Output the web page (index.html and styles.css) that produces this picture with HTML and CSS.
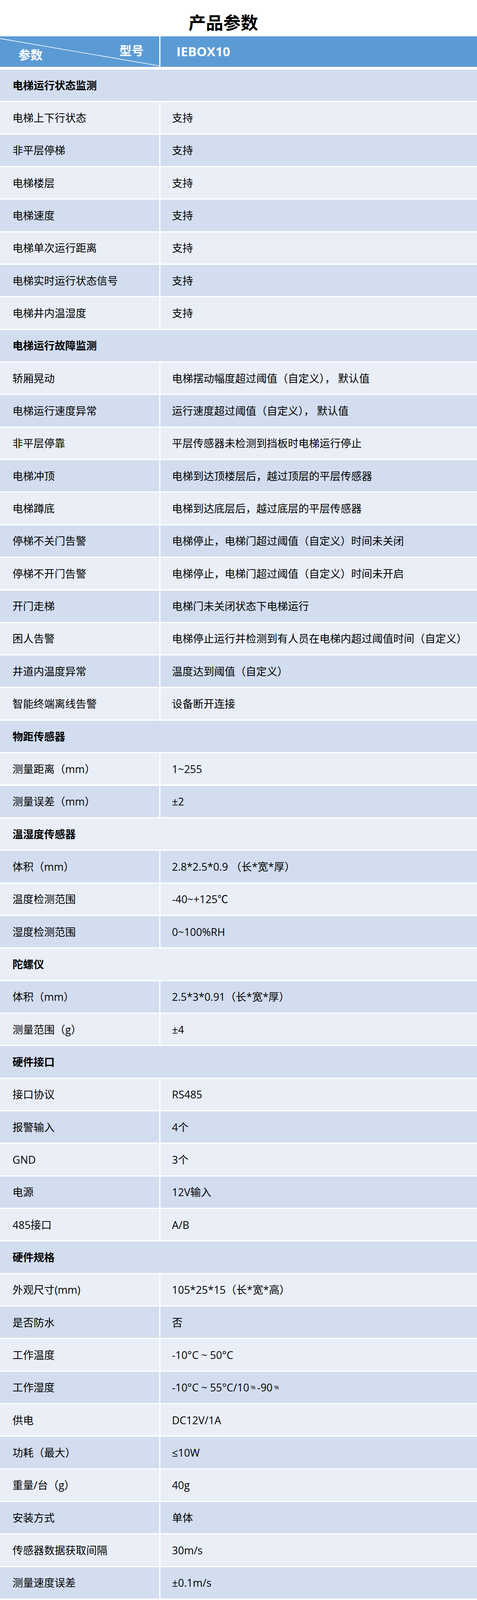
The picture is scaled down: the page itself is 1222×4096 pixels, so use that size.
FILE: index.html
```html
<!DOCTYPE html>
<html lang="zh-CN">
<head>
<meta charset="utf-8">
<title>产品参数</title>
<link rel="stylesheet" href="styles.css">
</head>
<body>
<div class="page">
  <div class="title">产品参数</div>
  <div class="head">
    <div class="head-left">
      <svg class="diag" viewBox="0 0 408 78" preserveAspectRatio="none"><line x1="0" y1="5.7" x2="408" y2="76.5" stroke="#ffffff" stroke-width="1.6"/></svg>
      <span class="h-param">参数</span>
      <span class="h-model">型号</span>
    </div>
    <div class="head-right"><span class="h-name">IEBOX10</span></div>
  </div>
  <div class="rows">
    <div class="row sec"><div class="cell">电梯运行状态监测</div></div>
    <div class="row"><div class="cell">电梯上下行状态</div><div class="cell val">支持</div></div>
    <div class="row"><div class="cell">非平层停梯</div><div class="cell val">支持</div></div>
    <div class="row"><div class="cell">电梯楼层</div><div class="cell val">支持</div></div>
    <div class="row"><div class="cell">电梯速度</div><div class="cell val">支持</div></div>
    <div class="row"><div class="cell">电梯单次运行距离</div><div class="cell val">支持</div></div>
    <div class="row"><div class="cell">电梯实时运行状态信号</div><div class="cell val">支持</div></div>
    <div class="row"><div class="cell">电梯井内温湿度</div><div class="cell val">支持</div></div>
    <div class="row sec"><div class="cell">电梯运行故障监测</div></div>
    <div class="row"><div class="cell">轿厢晃动</div><div class="cell val">电梯摆动幅度超过阈值（自定义），<span class="sp"></span>默认值</div></div>
    <div class="row"><div class="cell">电梯运行速度异常</div><div class="cell val">运行速度超过阈值（自定义），<span class="sp"></span>默认值</div></div>
    <div class="row"><div class="cell">非平层停靠</div><div class="cell val">平层传感器未检测到挡板时电梯运行停止</div></div>
    <div class="row"><div class="cell">电梯冲顶</div><div class="cell val">电梯到达顶楼层后，越过顶层的平层传感器</div></div>
    <div class="row"><div class="cell">电梯蹲底</div><div class="cell val">电梯到达底层后，越过底层的平层传感器</div></div>
    <div class="row"><div class="cell">停梯不关门告警</div><div class="cell val">电梯停止，电梯门超过阈值（自定义）时间未关闭</div></div>
    <div class="row"><div class="cell">停梯不开门告警</div><div class="cell val">电梯停止，电梯门超过阈值（自定义）时间未开启</div></div>
    <div class="row"><div class="cell">开门走梯</div><div class="cell val">电梯门未关闭状态下电梯运行</div></div>
    <div class="row"><div class="cell">困人告警</div><div class="cell val">电梯停止运行并检测到有人员在电梯内超过阈值时间（自定义）</div></div>
    <div class="row"><div class="cell">井道内温度异常</div><div class="cell val">温度达到阈值（自定义）</div></div>
    <div class="row"><div class="cell">智能终端离线告警</div><div class="cell val">设备断开连接</div></div>
    <div class="row sec"><div class="cell">物距传感器</div></div>
    <div class="row"><div class="cell">测量距离（mm）</div><div class="cell val">1~255</div></div>
    <div class="row"><div class="cell">测量误差（mm）</div><div class="cell val">±2</div></div>
    <div class="row sec"><div class="cell">温湿度传感器</div></div>
    <div class="row"><div class="cell">体积（mm）</div><div class="cell val">2.8*2.5*0.9 （长*宽*厚）</div></div>
    <div class="row"><div class="cell">温度检测范围</div><div class="cell val">-40~+125℃</div></div>
    <div class="row"><div class="cell">湿度检测范围</div><div class="cell val">0~100%RH</div></div>
    <div class="row sec"><div class="cell">陀螺仪</div></div>
    <div class="row"><div class="cell">体积（mm）</div><div class="cell val">2.5*3*0.91（长*宽*厚）</div></div>
    <div class="row"><div class="cell">测量范围（g）</div><div class="cell val">±4</div></div>
    <div class="row sec"><div class="cell">硬件接口</div></div>
    <div class="row"><div class="cell">接口协议</div><div class="cell val">RS485</div></div>
    <div class="row"><div class="cell">报警输入</div><div class="cell val">4个</div></div>
    <div class="row"><div class="cell">GND</div><div class="cell val">3个</div></div>
    <div class="row"><div class="cell">电源</div><div class="cell val">12V输入</div></div>
    <div class="row"><div class="cell">485接口</div><div class="cell val">A/B</div></div>
    <div class="row sec"><div class="cell">硬件规格</div></div>
    <div class="row"><div class="cell">外观尺寸(mm)</div><div class="cell val">105*25*15（长*宽*高）</div></div>
    <div class="row"><div class="cell">是否防水</div><div class="cell val">否</div></div>
    <div class="row"><div class="cell">工作温度</div><div class="cell val">-10°C ~ 50°C</div></div>
    <div class="row"><div class="cell">工作湿度</div><div class="cell val">-10°C ~ 55°C/10<span class="pct">%</span>-90<span class="pct">%</span></div></div>
    <div class="row"><div class="cell">供电</div><div class="cell val">DC12V/1A</div></div>
    <div class="row"><div class="cell">功耗（最大）</div><div class="cell val">≤10W</div></div>
    <div class="row"><div class="cell">重量/台（g）</div><div class="cell val">40g</div></div>
    <div class="row"><div class="cell">安装方式</div><div class="cell val">单体</div></div>
    <div class="row"><div class="cell">传感器数据获取间隔</div><div class="cell val">30m/s</div></div>
    <div class="row"><div class="cell">测量速度误差</div><div class="cell val">±0.1m/s</div></div>
  </div>
</div>
</body>
</html>
```

FILE: styles.css
```css
html, body {
  margin: 0;
  padding: 0;
  background: #ffffff;
}

body {
  font-family: "Open Sans", "Noto Sans CJK SC", sans-serif;
  color: #000000;
}

.page {
  width: 1222px;
}

.title {
  height: 93px;
  box-sizing: border-box;
  padding: 34px 78px 0 0;
  text-align: center;
  font-size: 44.6px;
  line-height: 1;
  font-weight: 700;
  font-family: "Noto Sans CJK SC", sans-serif;
}

.head {
  height: 78px;
  display: grid;
  grid-template-columns: 408px 1fr;
  column-gap: 3px;
  margin-bottom: 7px;
}

.head-left,
.head-right {
  background: #5b9bd5;
  border-bottom: 1px solid #4f8ccb;
  box-sizing: border-box;
  color: #ffffff;
  font-weight: 700;
  line-height: 1;
}

.head-left {
  position: relative;
  display: flex;
  justify-content: space-between;
  align-items: flex-start;
  padding: 0 40px 0 47px;
  font-size: 31px;
  font-family: "Noto Sans CJK SC", sans-serif;
}

.diag {
  position: absolute;
  left: 0;
  top: 0;
  width: 100%;
  height: 100%;
}

.h-param {
  position: relative;
  margin-top: 30px;
}

.h-model {
  position: relative;
  margin-top: 19px;
}

.head-right {
  padding: 22px 0 0 41px;
  font-size: 33px;
}

.rows {
  display: flex;
  flex-direction: column;
  gap: 3.1px;
}

.row {
  height: 80.26px;
  display: grid;
  grid-template-columns: 408px 1fr;
  column-gap: 3px;
  --bg: #e9eef7;
}

.rows > .row:nth-child(odd) {
  --bg: #d2ddef;
}

.row.sec {
  grid-template-columns: 1fr;
}

.cell {
  background: var(--bg);
  display: flex;
  align-items: center;
  padding-left: 32px;
  font-size: 27px;
  line-height: 1;
  white-space: nowrap;
}

.cell.val {
  padding-left: 29.5px;
}

.sec .cell {
  font-weight: 700;
}

.sp {
  display: inline-block;
  width: 7px;
}

.pct {
  font-size: 15px;
  margin: 0 4px;
}
```
